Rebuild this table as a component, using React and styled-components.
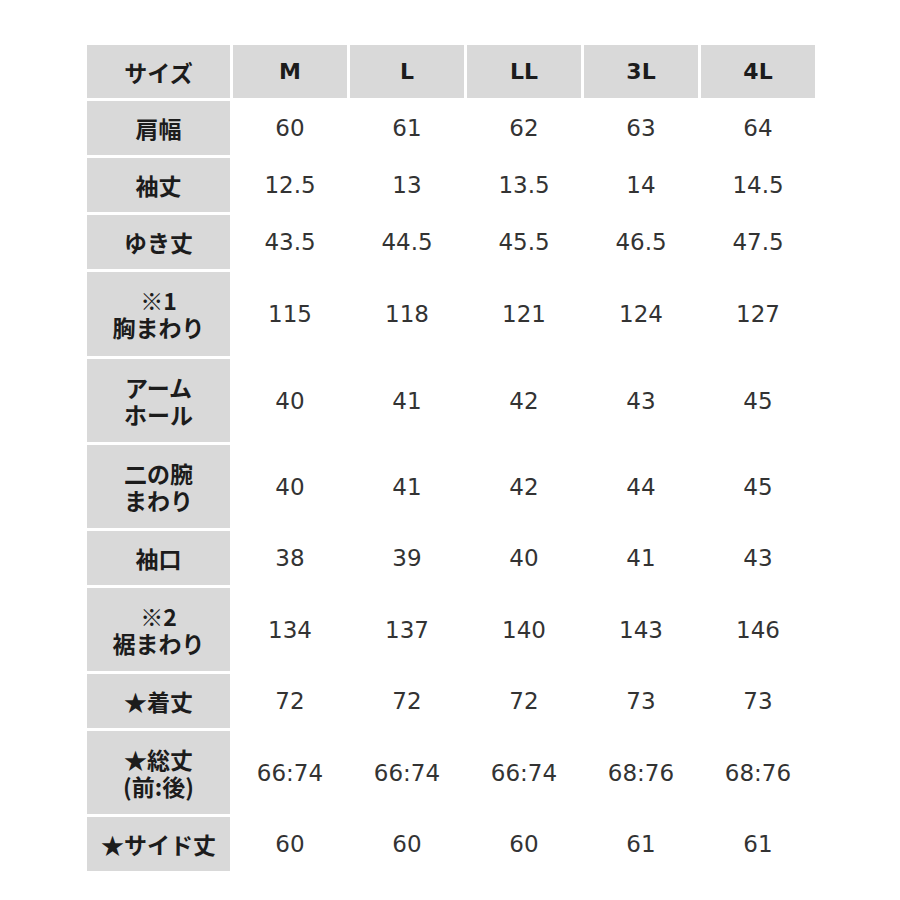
import React from "react";
import styled, { createGlobalStyle } from "styled-components";

const GlobalStyle = createGlobalStyle`
  html, body {
    margin: 0;
    padding: 0;
    background: #ffffff;
  }
`;

const Page = styled.div`
  width: 900px;
  height: 900px;
  padding: 45px 0 0 87px;
  box-sizing: border-box;
  background: #ffffff;
`;

const Grid = styled.div`
  display: grid;
  grid-template-columns: 143px repeat(5, 114px);
  grid-template-rows: ${(p) => p.rows.map((r) => `${r}px`).join(" ")};
  gap: 3px;
`;

const Cell = styled.div`
  display: flex;
  align-items: center;
  justify-content: center;
  text-align: center;
`;

const HeadCell = styled(Cell)`
  background: #d9d9d9;
  color: #1c1c1c;
  font-family: ${(p) =>
    p.$jp
      ? `"Noto Sans CJK JP", sans-serif`
      : `"DejaVu Sans", "Noto Sans CJK JP", sans-serif`};
  font-weight: 700;
  font-size: ${(p) => (p.$jp ? "23px" : "22px")};
`;

const LabelCell = styled(Cell)`
  background: #d9d9d9;
  color: #1c1c1c;
  font-family: "Noto Sans CJK JP", sans-serif;
  font-weight: 700;
  font-size: 23px;
  line-height: 27px;
`;

const ValueCell = styled(Cell)`
  color: #333333;
  font-family: "DejaVu Sans", sans-serif;
  font-size: 23px;
`;

const sizes = ["M", "L", "LL", "3L", "4L"];

const rows = [
  { label: ["肩幅"], values: ["60", "61", "62", "63", "64"] },
  { label: ["袖丈"], values: ["12.5", "13", "13.5", "14", "14.5"] },
  { label: ["ゆき丈"], values: ["43.5", "44.5", "45.5", "46.5", "47.5"] },
  { label: ["※1", "胸まわり"], values: ["115", "118", "121", "124", "127"] },
  { label: ["アーム", "ホール"], values: ["40", "41", "42", "43", "45"] },
  { label: ["二の腕", "まわり"], values: ["40", "41", "42", "44", "45"] },
  { label: ["袖口"], values: ["38", "39", "40", "41", "43"] },
  { label: ["※2", "裾まわり"], values: ["134", "137", "140", "143", "146"] },
  { label: ["★着丈"], values: ["72", "72", "72", "73", "73"] },
  {
    label: ["★総丈", "(前:後)"],
    values: ["66:74", "66:74", "66:74", "68:76", "68:76"],
  },
  { label: ["★サイド丈"], values: ["60", "60", "60", "61", "61"] },
];

const heights = [53, ...rows.map((r) => (r.label.length > 1 ? 83 : 54))];
heights[4] = 84;

const App = () => {
  return (
    <>
      <GlobalStyle />
      <Page>
        <Grid rows={heights}>
          <HeadCell $jp>サイズ</HeadCell>
          {sizes.map((s) => (
            <HeadCell key={s}>{s}</HeadCell>
          ))}
          {rows.map((row) => (
            <React.Fragment key={row.label.join("")}>
              <LabelCell>
                <span>
                  {row.label[0]}
                  {row.label[1] && (
                    <>
                      <br />
                      {row.label[1]}
                    </>
                  )}
                </span>
              </LabelCell>
              {row.values.map((v, i) => (
                <ValueCell key={i}>{v}</ValueCell>
              ))}
            </React.Fragment>
          ))}
        </Grid>
      </Page>
    </>
  );
};

export default App;
